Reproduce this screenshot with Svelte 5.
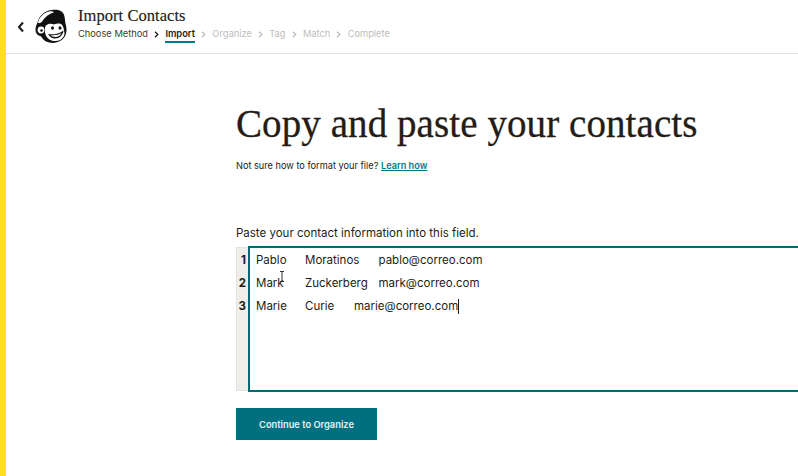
<script>
  const steps = [
    { label: 'Choose Method', state: 'done' },
    { label: 'Import', state: 'current' },
    { label: 'Organize', state: 'todo' },
    { label: 'Tag', state: 'todo' },
    { label: 'Match', state: 'todo' },
    { label: 'Complete', state: 'todo' }
  ];
  const rows = [
    ['Pablo', 'Moratinos', 'pablo@correo.com'],
    ['Mark', 'Zuckerberg', 'mark@correo.com'],
    ['Marie', 'Curie', 'marie@correo.com']
  ];
</script>

<div class="page">
  <header class="top">
    <button class="back" aria-label="Back">
      <svg width="8" height="12" viewBox="0 0 8 12"><path d="M6 1.5 2 6l4 4.500" fill="none" stroke="#1a1a1a" stroke-width="2"/></svg>
    </button>
    <svg class="logo" width="33" height="35" viewBox="0 0 33 35">
      <path d="M3 12C5 5 12 1 19 .8c5-.3 9 1.500 10 5 1 3 1 6 1.500 9 1.500 5 1.500 10-1.500 14-3 4-8 5.500-13 5-5-.5-8-3-10-6.500-3-.5-5.500-3-5.500-6.500 0-3 1-5 2.500-8.500z" fill="#111"/>
      <path d="M3 14C4 8 9 3.500 14 2.500c2-.4 4-.2 5 .8-5 1.500-9 4.500-12 9.500-1 1-3 1.700-4 1.200z" fill="#fff"/>
      <path d="M11 16.500c2-2 5-2.500 8-1 3-1.500 7-1.500 8.500 1 1.500 3 1.500 5 2 7.500 0 4.500-4 8-9 8-5 .2-8.500-2.500-10-6.500-1-3-1-6.500.5-9.500z" fill="#fff"/>
      <path d="M13 25c5 1 11 0 15.500-3.500-.5 4.500-4 8-8.500 8-3 0-5.500-2-7-4.500z" fill="#111"/>
      <path d="M15.500 26c4 .6 8 0 11-2-1 2.500-3.500 4-6 4-2 0-4-.8-5-2z" fill="#fff"/>
      <ellipse cx="17.500" cy="19" rx="1.500" ry="1.800" fill="#111"/>
      <ellipse cx="25" cy="19" rx="1.500" ry="1.800" fill="#111"/>
      <circle cx="6" cy="21" r="3.400" fill="#fff"/>
      <circle cx="6.500" cy="21.500" r="1.300" fill="#111"/>
    </svg>
    <div class="heading">
      <div class="title">Import Contacts</div>
      <nav class="steps">
        {#each steps as step, i}
          {#if i > 0}
            <svg class={i < 2 ? 'chev dark' : 'chev'} width="5" height="7" viewBox="0 0 5 7"><path d="M1 .8 3.800 3.500 1 6.200" fill="none" stroke="currentColor" stroke-width="1.300"/></svg>
          {/if}
          <span class="step {step.state}">{step.label}</span>
        {/each}
      </nav>
    </div>
  </header>

  <main class="content">
    <h1>Copy and paste your contacts</h1>
    <p class="hint">Not sure how to format your file? <a href="#learn">Learn how</a></p>
    <div class="label">Paste your contact information into this field.</div>
    <div class="editor">
      <div class="gutter">
        {#each rows as _, i}<div class="num">{i + 1}</div>{/each}
      </div>
      <div class="field">
        {#each rows as r, i}
          <div class="line">
            <span class="first">{r[0]}</span><span class={i === 2 ? 'last short' : 'last'}>{r[1]}</span><span class={i === 2 ? 'mail caret' : 'mail'}>{r[2]}</span>
          </div>
        {/each}
      </div>
      <svg class="ibeam" width="6" height="11" viewBox="0 0 6 11"><path d="M1 .5h4M1 10.500h4M3 .5v10" fill="none" stroke="#333" stroke-width="1"/></svg>
    </div>
    <button class="cta">Continue to Organize</button>
  </main>
</div>

<style>
  :global(body) { margin: 0; background: #fff; }
  .page {
    width: 798px;
    height: 476px;
    overflow: hidden;
    box-sizing: border-box;
    border-left: 6px solid #ffe01b;
    font-family: "Inter", "Liberation Sans", sans-serif;
    color: #241c15;
  }
  .top {
    height: 54px;
    box-sizing: border-box;
    border-bottom: 1px solid #e2e2e0;
    display: flex;
    align-items: flex-start;
  }
  .back {
    border: 0; background: none; padding: 0;
    margin: 21px 0 0 11px;
    width: 8px; height: 12px;
    display: flex;
  }
  .logo { margin: 9px 0 0 10px; flex: none; }
  .heading { margin: 6px 0 0 10px; }
  .title {
    font-family: "Liberation Serif", serif;
    font-size: 16.500px;
    line-height: 19px;
    letter-spacing: 0.05px;
    -webkit-text-stroke: 0.15px #241c15;
    color: #241c15;
  }
  .steps {
    display: flex;
    align-items: flex-start;
    height: 18px;
    margin-top: 1px;
    font-size: 9.300px;
    gap: 5.200px;
  }
  .step { line-height: 16px; color: #bdbdbd; }
  .step.done { color: #403b36; }
  .step.current {
    color: #241c15;
    font-weight: 600;
    height: 15px;
    border-bottom: 2px solid #007c89;
  }
  .chev { color: #bdbdbd; margin: 5px 1px 0; }
  .chev.dark { color: #241c15; }
  .content { padding: 0 0 0 230px; }
  h1 {
    margin: 48px 0 0;
    font-family: "Liberation Serif", serif;
    font-weight: 400;
    font-size: 39px;
    line-height: 44px;
    letter-spacing: 0.08px;
    -webkit-text-stroke: 0.3px #241c15;
    color: #241c15;
    white-space: nowrap;
  }
  .hint { margin: 13px 0 0; font-size: 9.200px; line-height: 14px; color: #241c15; }
  .hint a { color: #007c89; font-weight: 600; text-decoration: underline; }
  .label { margin-top: 52px; font-size: 11.500px; line-height: 16px; }
  .editor {
    position: relative;
    display: flex;
    margin-top: 5px;
    height: 146px;
  }
  .gutter {
    flex: none;
    width: 12px;
    margin-top: 1px;
    margin-bottom: 1px;
    background: #efeeea;
    border: 1px solid #e2e2e0;
    border-right: 0;
    padding: 1px 2px 0 0;
    box-sizing: border-box;
    text-align: right;
  }
  .num { height: 23px; line-height: 23px; font-size: 11.500px; font-weight: 700; }
  .field {
    width: 560px;
    flex: none;
    border: 2px solid #006a75;
    border-right: 0;
    padding: 1px 0 0 6px;
    box-sizing: border-box;
  }
  .line { height: 23px; line-height: 23px; font-size: 11.500px; white-space: nowrap; display: flex; }
  .first { width: 49px; }
  .last { width: 73.500px; }
  .last.short { width: 49px; }
  .caret { border-right: 1px solid #241c15; height: 15px; line-height: 15px; margin-top: 4px; }
  .ibeam { position: absolute; left: 43px; top: 25px; }
  .cta {
    display: block;
    margin-top: 16px;
    width: 141px;
    height: 32px;
    border: 0;
    background: #007080;
    color: #e6f3f4;
    font: 600 9.300px "Inter", "Liberation Sans", sans-serif;
  }
</style>
